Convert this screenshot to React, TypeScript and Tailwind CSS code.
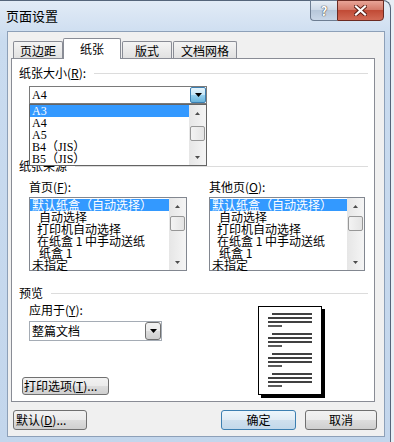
import React from "react";

const font = "font-['Noto_Sans_CJK_SC','Liberation_Sans',sans-serif]";
const btnFace =
  "bg-[linear-gradient(#f2f2f2_0%,#ebebeb_50%,#dddddd_50%,#cfcfcf_100%)] border border-[#707070] rounded-[3px]";

const Arrow = ({ up, big }: { up?: boolean; big?: boolean }) => {
  const w = big ? 7 : 5;
  const h = big ? 4 : 3;
  return (
    <svg width={w} height={h} viewBox={`0 0 ${w} ${h}`}>
      <path
        d={up ? `M0 ${h} L${w / 2} 0 L${w} ${h} Z` : `M0 0 L${w} 0 L${w / 2} ${h} Z`}
        fill={big ? "#000" : "#4d4d4d"}
      />
    </svg>
  );
};

const ScrollBar = ({ thumbTop, thumbH }: { thumbTop: number; thumbH: number }) => (
  <div className="w-[17px] h-full shrink-0 flex flex-col bg-[linear-gradient(90deg,#e6e6e6,#f5f5f5)]">
    <div className="h-[16px] flex items-center justify-center">
      <Arrow up />
    </div>
    <div className="flex-1">
      <div
        className="mx-[1px] rounded-[2px] border border-[#979797] bg-[linear-gradient(90deg,#f3f3f3,#e4e4e4)]"
        style={{ marginTop: thumbTop, height: thumbH }}
      />
    </div>
    <div className="h-[16px] flex items-center justify-center">
      <Arrow />
    </div>
  </div>
);

const Row = ({
  children,
  active,
  indent = 2,
}: {
  children: React.ReactNode;
  active?: boolean;
  indent?: number;
}) => (
  <div
    className={`h-[12px] leading-[12px] whitespace-nowrap text-[12px] ${
      active ? "bg-[#3399ff] text-white" : "text-black"
    }`}
    style={{ paddingLeft: indent }}
  >
    {children}
  </div>
);

const Section = ({ label, className = "" }: { label: React.ReactNode; className?: string }) => (
  <div className={`flex items-center h-[14px] pl-[7px] pr-[6px] ${className}`}>
    <span className="text-[12px] leading-[14px] whitespace-nowrap">{label}</span>
    <div className="flex-1 h-px bg-[#dcdcdc] ml-[8px]" />
  </div>
);

const SourceList = ({ w }: { w: number }) => (
  <div className="h-[74px] border border-[#828790] bg-white flex" style={{ width: w }}>
    <div className="flex-1 pt-px">
      <Row active>默认纸盒（自动选择）</Row>
      <Row indent={9}>自动选择</Row>
      <Row indent={7}>打印机自动选择</Row>
      <Row indent={7}>在纸盒 1 中手动送纸</Row>
      <Row indent={9}>纸盒 1</Row>
      <Row>未指定</Row>
    </div>
    <ScrollBar thumbTop={2} thumbH={15} />
  </div>
);

const PagePreview = () => (
  <div className="w-[64px] h-[89px] border border-black bg-white shadow-[3px_3px_0_#000]">
    <svg width="62" height="87" viewBox="1 1 62 87">
      {[0, 1, 2, 3].map((i) => {
        const y = 8 + i * 20;
        return (
          <g key={i} stroke="#000" strokeWidth="1.3">
            <line x1="14" y1={y} x2="54" y2={y} />
            <line x1="10" y1={y + 4} x2="54" y2={y + 4} />
            <line x1="10" y1={y + 8} x2="54" y2={y + 8} />
            <line x1="10" y1={y + 12} x2="24" y2={y + 12} />
          </g>
        );
      })}
    </svg>
  </div>
);

const Tab = ({ w, children, ml }: { w: number; children: React.ReactNode; ml: number }) => (
  <div
    className="h-[17px] border border-b-0 border-[#898c95] rounded-t-[2px] bg-[linear-gradient(#f4f4f4,#e1e1e1)] text-[12px] leading-[17px] text-center"
    style={{ width: w, marginLeft: ml }}
  >
    {children}
  </div>
);

const App = () => {
  return (
    <div className={`w-[394px] h-[442px] overflow-hidden bg-[#e8eef5] text-black ${font}`}>
      <div className="w-[391px] h-[442px] rounded-tr-[8px] border-r border-t border-[#55657a] bg-[linear-gradient(#e2ebf6,#c9dbef_40px,#c3d6ec)] flex flex-col">
        {/* Title bar */}
        <div className="h-[30px] flex items-start justify-between">
          <div className="pl-[6px] pt-[7px] text-[13px] leading-[16px]">页面设置</div>
          <div className="flex mr-[6px] -mt-px">
            <div className="w-[27px] h-[21px] rounded-bl-[4px] border border-[#6d7d92] border-r-0 bg-[linear-gradient(#e6edf5,#ccd8e6_50%,#b7c7da_50%,#c9d7e8)] flex items-center justify-center text-[13px] font-bold text-white [text-shadow:0_0_1px_#333,0_0_1px_#333]">
              ?
            </div>
            <div className="w-[47px] h-[21px] rounded-br-[4px] border border-[#6b2a22] bg-[linear-gradient(#e8a497,#d47b6b_45%,#c14b36_50%,#d26a55)] flex items-center justify-center">
              <svg width="13" height="11" viewBox="0 0 13 11">
                <path d="M2 1.5 L11 9.5 M11 1.5 L2 9.5" stroke="#5a1d14" strokeWidth="4" strokeLinecap="square" />
                <path d="M2 1.5 L11 9.5 M11 1.5 L2 9.5" stroke="#fff" strokeWidth="2.2" strokeLinecap="square" />
              </svg>
            </div>
          </div>
        </div>

        {/* Body */}
        <div className="ml-[7px] w-[378px] h-[406px] border border-[#8da0b8] bg-[#f0f0f0] pt-[6px] px-[3px]">
          {/* Tabs */}
          <div className="flex items-end h-[20px] relative z-10">
            <Tab w={50} ml={2}>页边距</Tab>
            <div className="w-[58px] h-[21px] -mb-px border border-b-0 border-[#898c95] rounded-t-[2px] bg-white text-[12px] leading-[20px] text-center">
              纸张
            </div>
            <Tab w={50} ml={1}>版式</Tab>
            <Tab w={64} ml={1}>文档网格</Tab>
          </div>

          {/* Panel */}
          <div className="relative w-[364px] h-[344px] border border-[#898c95] bg-white pt-[7px]">
            <Section label={<>纸张大小(<u>R</u>):</>} />

            <div className="ml-[17px] mt-[6px] w-[178px] h-[18px] border border-[#7a7a7a] bg-white flex">
              <div className="flex-1 pl-[2px] text-[12px] leading-[16px] font-['Liberation_Serif',serif]">A4</div>
              <div className="w-[16px] h-full border border-[#3c7fb1] rounded-[2px] bg-[linear-gradient(#e5f4fc,#c4e5f6_50%,#98d1ef_50%,#68b3db)] flex items-center justify-center">
                <Arrow big />
              </div>
            </div>

            <Section label="纸张来源" className="mt-[55px]" />

            <div className="flex mt-[7px] pl-[17px] text-[12px] leading-[14px] h-[14px]">
              <div className="w-[180px]">首页(<u>F</u>):</div>
              <div>其他页(<u>O</u>):</div>
            </div>

            <div className="flex mt-[3px] pl-[17px] gap-[22px]">
              <SourceList w={158} />
              <SourceList w={156} />
            </div>

            <Section label="预览" className="mt-[15px]" />

            <div className="flex">
              <div className="w-[200px] shrink-0">
                <div className="mt-[3px] pl-[17px] text-[12px] leading-[14px] h-[14px]">
                  应用于(<u>Y</u>):
                </div>
                <div className="ml-[17px] mt-[4px] w-[133px] h-[20px] border border-[#a5acb5] bg-white flex">
                  <div className="flex-1 pl-[2px] text-[12px] leading-[18px]">整篇文档</div>
                  <div className={`w-[16px] h-full ${btnFace} rounded-[2px] flex items-center justify-center`}>
                    <Arrow big />
                  </div>
                </div>
                <div
                  className={`ml-[10px] mt-[36px] w-[87px] h-[18px] ${btnFace} text-[12px] leading-[16px] pl-[1px]`}
                >
                  打印选项(<u>T</u>)...
                </div>
              </div>
              <div className="ml-[46px] mt-[6px]">
                <PagePreview />
              </div>
            </div>

            {/* Open dropdown list */}
            <div className="absolute left-[17px] top-[45px] w-[178px] h-[62px] border border-[#646464] bg-white flex z-20">
              <div className="flex-1 font-['Liberation_Serif','Noto_Sans_CJK_SC',serif]">
                <Row active>A3</Row>
                <Row>A4</Row>
                <Row>A5</Row>
                <Row>B4（JIS）</Row>
                <Row>B5（JIS）</Row>
              </div>
              <ScrollBar thumbTop={5} thumbH={15} />
            </div>
          </div>

          {/* Bottom buttons */}
          <div className="flex mt-[8px] pr-[4px]">
            <div className={`ml-[2px] w-[74px] h-[20px] ${btnFace} text-[12px] leading-[18px] pl-[2px]`}>
              默认(<u>D</u>)...
            </div>
            <div className="ml-auto w-[75px] h-[20px] border border-[#3c7fb1] rounded-[3px] bg-[linear-gradient(#edf6fc,#dfebf4_50%,#cfe0ee_50%,#c2d8ea)] text-[12px] leading-[18px] text-center">
              确定
            </div>
            <div className={`ml-[9px] w-[72px] h-[20px] ${btnFace} text-[12px] leading-[18px] text-center`}>
              取消
            </div>
          </div>
        </div>
      </div>
    </div>
  );
};

export default App;
